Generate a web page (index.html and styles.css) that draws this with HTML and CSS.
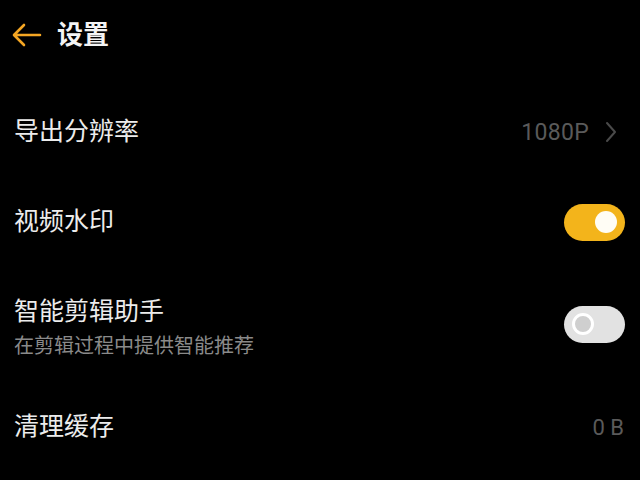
FILE: index.html
```html
<!DOCTYPE html>
<html lang="zh-CN">
<head>
<meta charset="utf-8">
<title>设置</title>
<link rel="stylesheet" href="styles.css">
</head>
<body>
<div class="page">
  <header class="header">
    <svg class="back" width="30" height="24" viewBox="0 0 30 24" aria-hidden="true">
      <path d="M28 12H3 M12 2L2 12L12 22" fill="none" stroke="#f5a623" stroke-width="2.6" stroke-linecap="round" stroke-linejoin="round"/>
    </svg>
    <h1 class="title">设置</h1>
  </header>
  <main class="list">
    <div class="row row-a">
      <div class="label">导出分辨率</div>
      <div class="value">
        <span class="value-text big">1080P</span>
        <svg class="chev" width="14" height="22" viewBox="0 0 14 22" aria-hidden="true">
          <path d="M3 2L11 11L3 20" fill="none" stroke="#4a4a4a" stroke-width="2" stroke-linecap="round" stroke-linejoin="round"/>
        </svg>
      </div>
    </div>
    <div class="row row-b">
      <div class="label">视频水印</div>
      <div class="toggle on"><span class="knob"></span></div>
    </div>
    <div class="row row-c">
      <div class="text-block">
        <div class="label">智能剪辑助手</div>
        <div class="sub">在剪辑过程中提供智能推荐</div>
      </div>
      <div class="toggle off"><span class="knob"></span></div>
    </div>
    <div class="row row-d">
      <div class="label">清理缓存</div>
      <div class="value"><span class="value-text">0 B</span></div>
    </div>
  </main>
</div>
</body>
</html>
```
FILE: styles.css
```css
* { box-sizing: border-box; }
html, body {
  margin: 0;
  padding: 0;
  background: #000;
}
body {
  font-family: Roboto, "Noto Sans CJK SC", "Noto Sans", sans-serif;
  color: #ececec;
  width: 640px;
  height: 480px;
  overflow: hidden;
}
.page {
  display: flex;
  flex-direction: column;
}
.header {
  height: 70px;
  display: flex;
  align-items: center;
  padding-left: 12px;
  gap: 15px;
}
.back { display: block; }
.title {
  margin: 0;
  font-size: 26px;
  font-weight: 700;
  color: #f4f4f4;
  line-height: 1;
  letter-spacing: 0;
}
.list {
  padding-top: 17px;
  display: flex;
  flex-direction: column;
}
.row {
  display: flex;
  align-items: center;
  justify-content: space-between;
  padding: 0 15px 0 14px;
}
.row-a, .row-b { height: 90px; }
.row-c { height: 114px; }
.row-d { height: 92px; }
.label {
  font-size: 25px;
  line-height: 30px;
  color: #ececec;
}
.text-block {
  display: flex;
  flex-direction: column;
  gap: 6px;
  padding-top: 8px;
}
.sub {
  font-size: 20px;
  line-height: 26px;
  color: #8a8a8a;
}
.value {
  display: flex;
  align-items: center;
  gap: 15px;
}
.value-text {
  font-size: 22px;
  color: #5a5a5a;
}
.value-text.big {
  font-size: 23px;
  letter-spacing: 0.3px;
}
.row-d .value { margin-right: 1px; }
.chev { display: block; margin-right: 7px; }
.toggle {
  width: 61px;
  height: 37px;
  border-radius: 19px;
  display: flex;
  align-items: center;
  padding: 0 8px;
}
.toggle.on {
  background: #f3b41b;
  justify-content: flex-end;
}
.toggle.off {
  background: #e2e2e2;
  justify-content: flex-start;
}
.knob {
  width: 22px;
  height: 22px;
  border-radius: 50%;
}
.toggle.on .knob {
  background: #fffdf5;
}
.toggle.off .knob {
  background: #cfcfcf;
  border: 3px solid #fff;
}
```
